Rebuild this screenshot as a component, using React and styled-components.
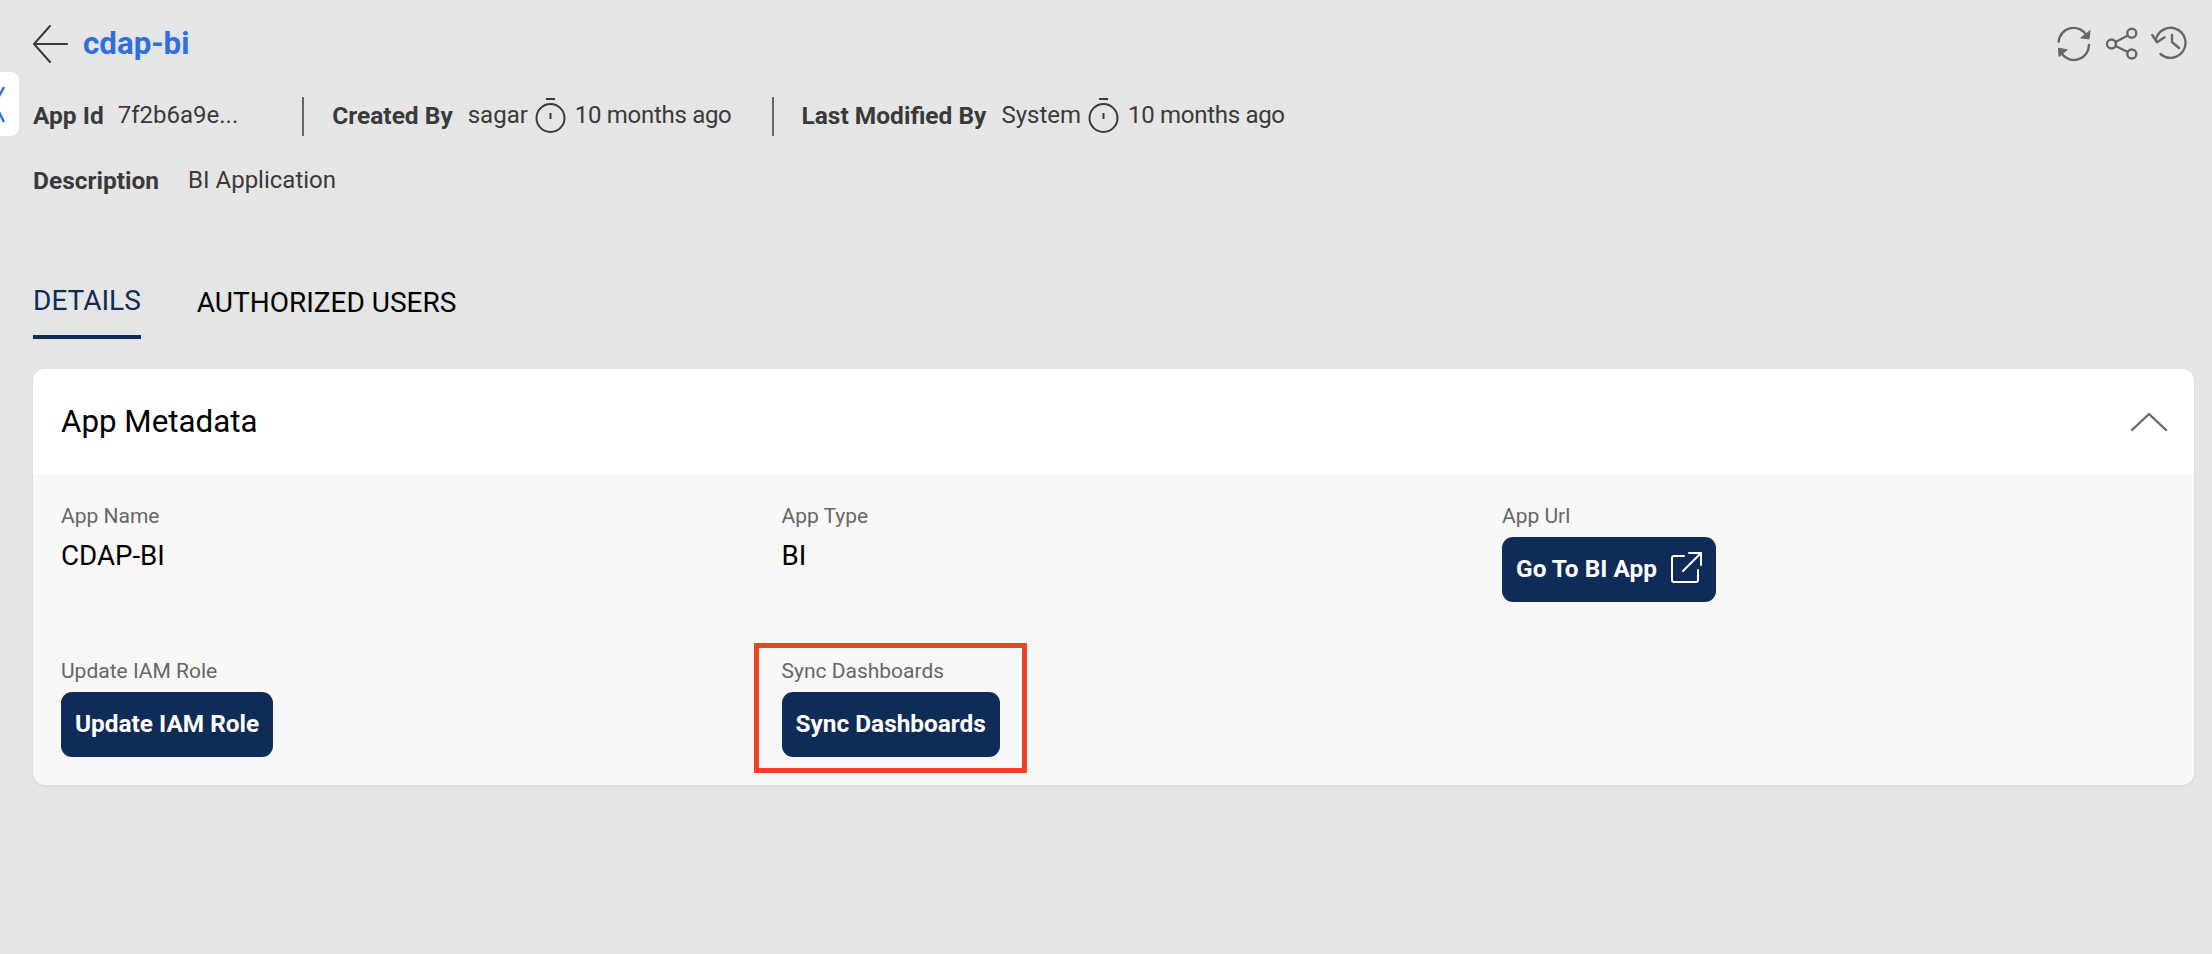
import React from 'react';
import styled, { createGlobalStyle } from 'styled-components';

const GlobalStyle = createGlobalStyle`
html, body {
    margin: 0;
    padding: 0;
    background: #e5e5e5;
    font-family: Roboto, "Liberation Sans", sans-serif;
}
`;

const Page = styled.div`
position: relative;
height: 954px;
padding: 20px 18px 0 33px;
box-sizing: border-box;
overflow: hidden;
background: #e5e5e5;
`;

const CollapseTab = styled.div`
position: absolute;
left: 0;
top: 72px;
width: 19px;
height: 64px;
background: #fff;
border-radius: 0 8px 8px 0;
overflow: hidden;
`;

const TitleRow = styled.div`
display: flex;
align-items: center;
height: 46px;
`;

const BackIcon = styled.svg`
width: 36px;
height: 40px;
margin-right: 14px;
fill: none;
stroke: #3a3a3a;
stroke-width: 2;
stroke-linecap: round;
stroke-linejoin: round;
`;

const Title = styled.div`
flex: 1;
font-size: 31.3px;
font-weight: 700;
color: #2f6fdc;
`;

const ActionIcons = styled.div`
display: flex;
align-items: center;
gap: 11.5px;
margin: 2px 7px 0 0;
`;

const ActionIcon = styled.svg`
width: 36px;
height: 36px;
fill: none;
stroke: #666;
stroke-width: 2.4;
stroke-linecap: round;
stroke-linejoin: round;
`;

const MetaRow = styled.div`
display: flex;
align-items: center;
height: 40px;
margin-top: 30px;
font-size: 24px;
color: #3a3a3a;
`;

const MetaLabel = styled.span`
font-size: 24.5px;
font-weight: 700;
margin-right: ${(p) => p.gap || 15}px;
margin-bottom: 2px;
`;

const MetaValue = styled.span`
font-weight: 400;
margin-bottom: 2px;
`;

const TimeValue = styled.span`
font-weight: 400;
letter-spacing: -0.3px;
margin-bottom: 2px;
`;

const Divider = styled.span`
width: 2px;
height: 39px;
background: #666;
margin: 0 28px 0 ${(p) => p.left}px;
`;

const TimerIcon = styled.svg`
width: 31px;
height: 36px;
margin: -2px 9px 0 7px;
fill: none;
stroke: #3a3a3a;
stroke-width: 2;
`;

const DescriptionRow = styled(MetaRow)`
margin-top: 25px;
`;

const Tabs = styled.div`
display: flex;
gap: 56px;
margin-top: 77px;
`;

const Tab = styled.div`
height: 61px;
line-height: ${(p) => (p.active ? 46 : 50)}px;
box-sizing: border-box;
font-size: 28px;
color: ${(p) => (p.active ? '#0f2b57' : '#000')};
border-bottom: 4px solid ${(p) => (p.active ? '#0f2b57' : 'transparent')};
`;

const Card = styled.div`
margin-top: 30px;
border-radius: 12px;
overflow: hidden;
background: #f8f8f8;
box-shadow: 0 1px 3px rgba(0, 0, 0, 0.08);
`;

const CardHeader = styled.div`
display: flex;
align-items: center;
justify-content: space-between;
height: 105px;
padding: 0 26px 0 28px;
background: #fff;
`;

const CardTitle = styled.div`
font-size: 31.3px;
color: #000;
`;

const ChevronIcon = styled.svg`
width: 38px;
height: 20px;
fill: none;
stroke: #666;
stroke-width: 2.4;
stroke-linecap: round;
stroke-linejoin: round;
`;

const CardBody = styled.div`
display: grid;
grid-template-columns: repeat(3, 720.5px);
grid-auto-rows: 155px;
height: 311px;
padding-left: 28px;
box-sizing: border-box;
`;

const Field = styled.div`
padding-top: 30px;
box-sizing: border-box;
`;

const FieldLabel = styled.div`
height: 24px;
line-height: 24px;
font-size: 21px;
color: #666;
`;

const FieldValue = styled.div`
margin-top: 12px;
font-size: 27.7px;
line-height: 32px;
color: #000;
`;

const ActionButton = styled.button`
display: inline-flex;
align-items: center;
gap: 13px;
height: 65px;
margin-top: 9px;
padding: 0 14px 3px;
border: none;
border-radius: 11px;
background: #0f2b57;
color: #fff;
font-family: inherit;
font-size: 24.4px;
font-weight: 700;
`;

const ExternalIcon = styled.svg`
width: 32px;
height: 32px;
fill: none;
stroke: #fff;
stroke-width: 2;
stroke-linecap: round;
stroke-linejoin: round;
`;

const Highlight = styled.div`
position: absolute;
left: 754px;
top: 643px;
width: 273px;
height: 130px;
box-sizing: border-box;
border: 5px solid #ee4227;
pointer-events: none;
`;

const Timer = () => (
    <TimerIcon viewBox="0 0 31 36">
        <circle cx="15.5" cy="21" r="14" />
        <path d="M11 2h9M15.5 16v6" />
    </TimerIcon>
);

const App = () => (
    <Page>
        <GlobalStyle />
        <CollapseTab>
            <svg width="19" height="64" viewBox="0 0 19 64" fill="none" stroke="#2f6fdc" strokeWidth="2.4">
                <path d="M4 15 L-5 32 L4 50" />
            </svg>
        </CollapseTab>
        <TitleRow>
            <BackIcon viewBox="0 0 36 40">
                <path d="M34 21H1M17 3L1 21l16 18" />
            </BackIcon>
            <Title>cdap-bi</Title>
            <ActionIcons>
                <ActionIcon viewBox="0 0 36 36">
                    <path d="M2.7 15.7A15 15 0 0 1 31 10M33 19A15 15 0 0 1 6 28" />
                    <path d="M34 5l-1 8-8-1zM2.5 22.5l.5 8 8-6.500z" fill="#666" strokeWidth="1" />
                </ActionIcon>
                <ActionIcon viewBox="0 0 36 36">
                    <circle cx="7.500" cy="18" r="4.500" />
                    <circle cx="27.800" cy="7.300" r="4.500" />
                    <circle cx="27.800" cy="28" r="4.500" />
                    <path d="M11.500 16l12.300-6.500M11.500 20l12.300 6" />
                </ActionIcon>
                <ActionIcon viewBox="0 0 36 36">
                    <path d="M5 13A15 15 0 1 1 9.500 28" />
                    <path d="M1.300 9L6 16.300l7.600-5M21 9v7l7 6" />
                </ActionIcon>
            </ActionIcons>
        </TitleRow>
        <MetaRow>
            <MetaLabel gap={14}>App Id</MetaLabel>
            <MetaValue>7f2b6a9e...</MetaValue>
            <Divider left={64} />
            <MetaLabel>Created By</MetaLabel>
            <MetaValue>sagar</MetaValue>
            <Timer />
            <TimeValue>10 months ago</TimeValue>
            <Divider left={40} />
            <MetaLabel>Last Modified By</MetaLabel>
            <MetaValue>System</MetaValue>
            <Timer />
            <TimeValue>10 months ago</TimeValue>
        </MetaRow>
        <DescriptionRow>
            <MetaLabel gap={29}>Description</MetaLabel>
            <MetaValue>BI Application</MetaValue>
        </DescriptionRow>
        <Tabs>
            <Tab active>DETAILS</Tab>
            <Tab>AUTHORIZED USERS</Tab>
        </Tabs>
        <Card>
            <CardHeader>
                <CardTitle>App Metadata</CardTitle>
                <ChevronIcon viewBox="0 0 38 20">
                    <path d="M2 18L19 2l17 16" />
                </ChevronIcon>
            </CardHeader>
            <CardBody>
                <Field>
                    <FieldLabel>App Name</FieldLabel>
                    <FieldValue>CDAP-BI</FieldValue>
                </Field>
                <Field>
                    <FieldLabel>App Type</FieldLabel>
                    <FieldValue>BI</FieldValue>
                </Field>
                <Field>
                    <FieldLabel>App Url</FieldLabel>
                    <ActionButton>
                        Go To BI App
                        <ExternalIcon viewBox="1 1 32 32">
                            <path d="M15 5H5a2 2 0 0 0-2 2v22a2 2 0 0 0 2 2h22a2 2 0 0 0 2-2V19M14 20L32 2M20 2h12v12" />
                        </ExternalIcon>
                    </ActionButton>
                </Field>
                <Field>
                    <FieldLabel>Update IAM Role</FieldLabel>
                    <ActionButton>Update IAM Role</ActionButton>
                </Field>
                <Field>
                    <FieldLabel>Sync Dashboards</FieldLabel>
                    <ActionButton>Sync Dashboards</ActionButton>
                </Field>
            </CardBody>
        </Card>
        <Highlight />
    </Page>
);

export default App;
